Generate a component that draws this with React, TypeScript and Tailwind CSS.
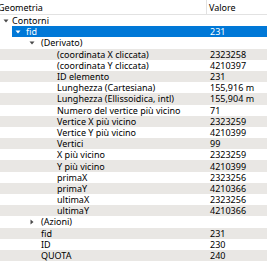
type Row = {
  label: string;
  value?: string;
  lead: string;
  arrow?: "down" | "right";
  gap?: string;
  selected?: boolean;
};

const rows: Row[] = [
  { label: "Contorni", lead: "w-[3px]", arrow: "down", gap: "ml-[3px]" },
  { label: "fid", value: "231", lead: "w-[15px]", arrow: "down", gap: "ml-[5px]", selected: true },
  { label: "(Derivato)", lead: "w-[29px]", arrow: "down", gap: "ml-[6px]" },
  { label: "(coordinata X cliccata)", value: "2323258", lead: "w-[57px]" },
  { label: "(coordinata Y cliccata)", value: "4210397", lead: "w-[57px]" },
  { label: "ID elemento", value: "231", lead: "w-[57px]" },
  { label: "Lunghezza (Cartesiana)", value: "155,916 m", lead: "w-[57px]" },
  { label: "Lunghezza (Ellissoidica, intl)", value: "155,904 m", lead: "w-[57px]" },
  { label: "Numero del vertice più vicino", value: "71", lead: "w-[57px]" },
  { label: "Vertice X più vicino", value: "2323259", lead: "w-[57px]" },
  { label: "Vertice Y più vicino", value: "4210399", lead: "w-[57px]" },
  { label: "Vertici", value: "99", lead: "w-[57px]" },
  { label: "X più vicino", value: "2323259", lead: "w-[57px]" },
  { label: "Y più vicino", value: "4210399", lead: "w-[57px]" },
  { label: "primaX", value: "2323256", lead: "w-[57px]" },
  { label: "primaY", value: "4210366", lead: "w-[57px]" },
  { label: "ultimaX", value: "2323256", lead: "w-[57px]" },
  { label: "ultimaY", value: "4210366", lead: "w-[57px]" },
  { label: "(Azioni)", lead: "w-[29px]", arrow: "right", gap: "ml-[6px]" },
  { label: "fid", value: "231", lead: "w-[41px]" },
  { label: "ID", value: "230", lead: "w-[41px]" },
  { label: "QUOTA", value: "240", lead: "w-[41px]" },
];

function Arrow({ dir, light }: { dir: "down" | "right"; light?: boolean }) {
  const fill = light ? "#ffffff" : "#4a4a4a";
  return (
    <svg width="6" height="6" viewBox="0 0 6 6" className="shrink-0">
      {dir === "down" ? (
        <polygon points="0.5,1.5 5.5,1.5 3,4.5" fill={fill} />
      ) : (
        <polygon points="1.5,0.5 4.5,3 1.5,5.5" fill={fill} />
      )}
    </svg>
  );
}

export default function App() {
  return (
    <div className="h-[270px] w-[267px] overflow-hidden bg-white text-[9px] leading-[11px] text-black [font-family:'Noto_Sans','Liberation_Sans',sans-serif]">
      <div className="grid h-[15px] grid-cols-[207px_1fr] border-b border-[#e2e2e2] bg-white">
        <div className="flex items-center overflow-hidden border-r border-[#e2e2e2]">
          <span className="-ml-[2px]">Geometria</span>
        </div>
        <div className="flex items-center pl-[2px]">Valore</div>
      </div>

      {rows.map((r, i) => (
        <div
          key={i}
          className={
            "grid h-[11.2px] grid-cols-[207px_1fr] " +
            (r.selected ? "bg-[#0078d7] text-white" : i % 2 === 1 ? "bg-[#e9e7e4]" : "bg-white")
          }
        >
          <div className="flex h-full items-center overflow-hidden whitespace-nowrap">
            {r.selected ? (
              <div className="flex h-full w-[15px] shrink-0">
                <div className="h-full w-[12px] bg-white" />
              </div>
            ) : (
              <div className={r.lead + " shrink-0"} />
            )}
            {r.arrow && <Arrow dir={r.arrow} light={r.selected} />}
            <span className={r.gap ?? ""}>{r.label}</span>
          </div>
          <div className="flex items-center pl-[3px] whitespace-nowrap">{r.value}</div>
        </div>
      ))}
    </div>
  );
}
